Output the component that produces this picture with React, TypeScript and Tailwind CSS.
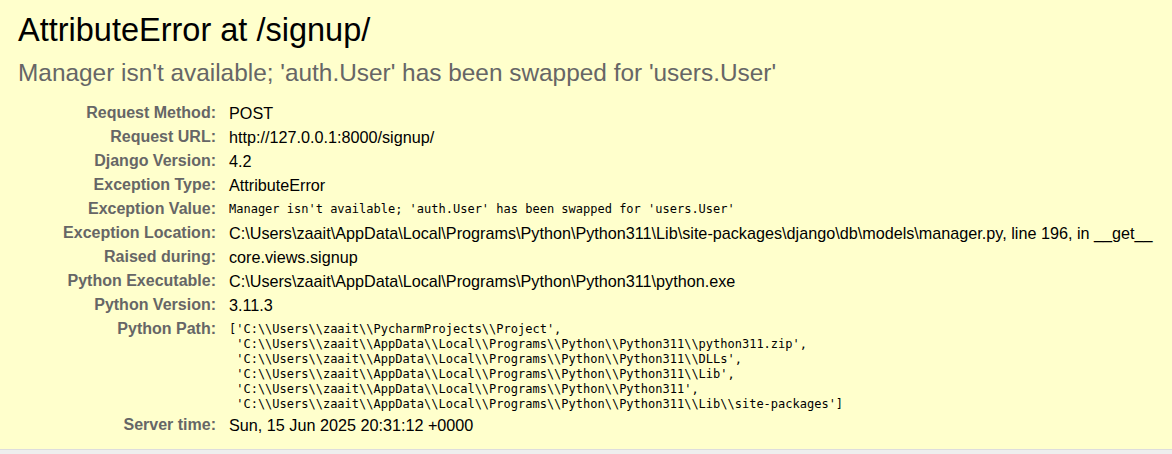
const rows: { label: string; value: string; mono?: boolean }[] = [
  { label: 'Request Method:', value: 'POST' },
  { label: 'Request URL:', value: 'http://127.0.0.1:8000/signup/' },
  { label: 'Django Version:', value: '4.2' },
  { label: 'Exception Type:', value: 'AttributeError' },
  { label: 'Exception Value:', value: "Manager isn't available; 'auth.User' has been swapped for 'users.User'", mono: true },
  {
    label: 'Exception Location:',
    value: 'C:\\Users\\zaait\\AppData\\Local\\Programs\\Python\\Python311\\Lib\\site-packages\\django\\db\\models\\manager.py, line 196, in __get__',
  },
  { label: 'Raised during:', value: 'core.views.signup' },
  { label: 'Python Executable:', value: 'C:\\Users\\zaait\\AppData\\Local\\Programs\\Python\\Python311\\python.exe' },
  { label: 'Python Version:', value: '3.11.3' },
];

const pythonPath = [
  "['C:\\\\Users\\\\zaait\\\\PycharmProjects\\\\Project',",
  " 'C:\\\\Users\\\\zaait\\\\AppData\\\\Local\\\\Programs\\\\Python\\\\Python311\\\\python311.zip',",
  " 'C:\\\\Users\\\\zaait\\\\AppData\\\\Local\\\\Programs\\\\Python\\\\Python311\\\\DLLs',",
  " 'C:\\\\Users\\\\zaait\\\\AppData\\\\Local\\\\Programs\\\\Python\\\\Python311\\\\Lib',",
  " 'C:\\\\Users\\\\zaait\\\\AppData\\\\Local\\\\Programs\\\\Python\\\\Python311',",
  " 'C:\\\\Users\\\\zaait\\\\AppData\\\\Local\\\\Programs\\\\Python\\\\Python311\\\\Lib\\\\site-packages']",
];

const Label = ({ children }: { children: string }) => (
  <div className="text-right font-bold text-[#666] py-[3px] leading-[18px]">{children}</div>
);

const App = () => {
  return (
    <div className="h-[454px] bg-[#eeeeee] font-['Liberation_Sans',Arial,sans-serif] text-[16px] text-black">
      <div className="bg-[#ffffcc] border-b border-[#dddddd] px-[18px] pt-[11px] pb-[12px]">
        <h1 className="text-[32.5px] leading-[38px] font-normal">AttributeError at /signup/</h1>
        <h2 className="mt-[10px] text-[24.4px] leading-[28px] font-normal text-[#666]">
          Manager isn't available; 'auth.User' has been swapped for 'users.User'
        </h2>
        <div className="mt-[14px] grid grid-cols-[198px_1fr]">
          {rows.map(r => (
            <div key={r.label} className="contents">
              <Label>{r.label}</Label>
              {r.mono ? (
                <div className="pl-[13px] py-[3px] leading-[18px] whitespace-pre font-['DejaVu_Sans_Mono',monospace] text-[12px]">{r.value}</div>
              ) : (
                <div className="pl-[13px] py-[3px] leading-[18px] text-[16.2px] whitespace-nowrap">{r.value}</div>
              )}
            </div>
          ))}
          <Label>Python Path:</Label>
          <pre className="pl-[13px] pt-[5px] pb-[1px] leading-[15px] text-[12px] font-['DejaVu_Sans_Mono',monospace] whitespace-pre">
            {pythonPath.join('\n')}
          </pre>
          <Label>Server time:</Label>
          <div className="pl-[13px] py-[3px] leading-[18px] text-[16.2px] whitespace-nowrap">Sun, 15 Jun 2025 20:31:12 +0000</div>
        </div>
      </div>
    </div>
  );
};

export default App;
